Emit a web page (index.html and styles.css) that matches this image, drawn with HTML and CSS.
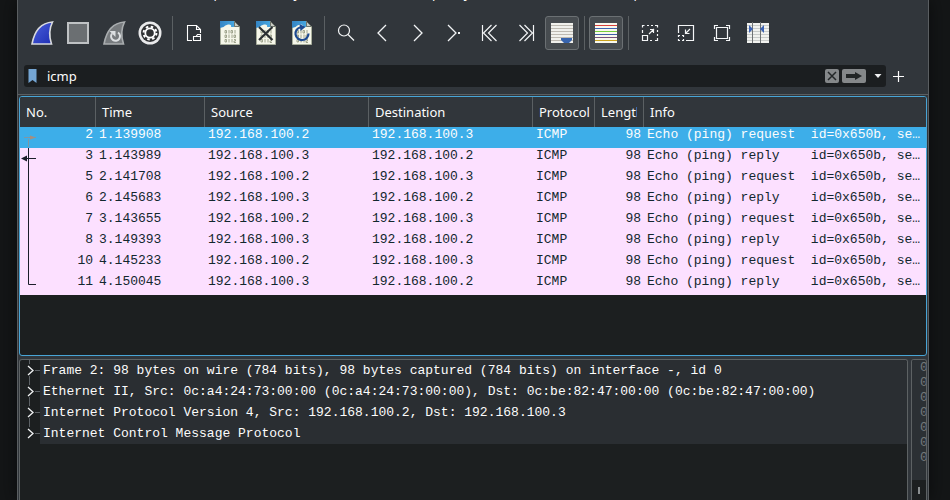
FILE: index.html
```html
<!DOCTYPE html>
<html lang="en">
<head>
<meta charset="utf-8">
<title>Packet capture</title>
<link rel="stylesheet" href="styles.css">
</head>
<body>
<svg class="defs" aria-hidden="true">
  <defs>
    <linearGradient id="blue-fin" x1="0" y1="0" x2="1" y2="1"><stop offset="0" stop-color="#4b60dc"/><stop offset="1" stop-color="#1f2fb4"/></linearGradient>
    <linearGradient id="sky" x1="0" y1="0" x2="1" y2="0"><stop offset="0" stop-color="#3585c4"/><stop offset="1" stop-color="#4bb0e8"/></linearGradient>
    <symbol id="capture-file" viewBox="0 0 24 24">
      <path d="M2.500 0.500H16.500L21.500 5.500V23.500H2.500Z" fill="#f6f7ea" stroke="#a8ae9c"/>
      <path d="M2 0H16L20 6H13Q14 3 10 3.500Q7 4 5.500 6L2 7Z" fill="url(#sky)"/>
      <path d="M16.500 0.500V5.500H21.500Z" fill="#c9ccc4" stroke="#6f756c"/>
      <path d="M7 9.500h1.500v2.500H7zM11 9v3.500M13 9.500h1.500v2.500H13zM17 9v3.500M7 14h1.500v2.500H7zM11 13.500v3.500M14 13.500v3.500M16 14h1.500v2.500H16zM7 18.500h1.500v2.500H7zM11 18v3.500M14 18v3.500M16 18.500h1.500v1.500h-1.500v1.500h2" fill="none" stroke="#8d9279" stroke-width="0.800"/>
    </symbol>
    <symbol id="branch" viewBox="0 0 20 21">
      <path d="M9.500 0V4M9.500 16V21M15 10.500H20" fill="none" stroke="#5c6165"/>
      <path d="M8 6L13 10.500L8 15" fill="none" stroke="#f0f2f3" stroke-width="1.300"/>
    </symbol>
    <symbol id="branch-last" viewBox="0 0 20 21">
      <path d="M9.500 0V4M15 10.500H20" fill="none" stroke="#5c6165"/>
      <path d="M8 6L13 10.500L8 15" fill="none" stroke="#f0f2f3" stroke-width="1.300"/>
    </symbol>
  </defs>
</svg>
<div class="window">
  <nav class="menubar">
    <a href="#file">File</a><a href="#edit">Edit</a><a href="#view">View</a><a href="#go">Go</a><a href="#capture">Capture</a><a href="#analyze">Analyze</a><a href="#statistics">Statistics</a><a href="#telephony">Telephony</a><a href="#wireless">Wireless</a><a href="#tools">Tools</a><a href="#help">Help</a>
  </nav>
  <div class="toolbar" role="toolbar" aria-label="Main toolbar">
    <button class="tool" aria-label="Start capture"><svg viewBox="0 0 24 24"><path d="M2 23C4 12 9 2 22.500 1Q17.500 11 21.500 23Z" fill="url(#blue-fin)" stroke="#d8dade" stroke-width="1.600"/></svg></button>
    <button class="tool" aria-label="Stop capture"><svg viewBox="0 0 24 24"><path d="M2 2H22V22H2Z" fill="#6b6f72" stroke="#bfc2c4" stroke-width="2"/></svg></button>
    <button class="tool" aria-label="Restart capture"><svg viewBox="0 0 24 24"><path d="M2 23C4 12 9 2 22.500 1Q17.500 11 21.500 23Z" fill="#777b7e" stroke="#a9adaf" stroke-width="1.600"/><path d="M16 11.500A4.500 4.500 0 1 1 10 12.500" fill="none" stroke="#dcdfe1" stroke-width="2"/><path d="M7.500 10H13.500V16Z" fill="#dcdfe1"/></svg></button>
    <button class="tool" aria-label="Capture options"><svg viewBox="0 0 24 24"><circle cx="12" cy="12" r="11.500" fill="#e9eaeb"/><circle cx="12" cy="12" r="9" fill="#303234"/><circle cx="12" cy="12" r="6.400" fill="none" stroke="#fff" stroke-width="2" stroke-dasharray="2.500 2.527"/><circle cx="12" cy="12" r="4.700" fill="#303234" stroke="#fff" stroke-width="1.800"/></svg></button>
    <span class="separator"></span>
    <button class="tool" aria-label="Open"><svg viewBox="0 0 24 24"><path d="M10 19.500H5.500V4.500H14.500L18.500 8.500V12M14.500 4.500V8.500H18.500M11.500 19.500V15.500H14L15.500 13.500H18.500V19.500ZM14 15.500H18.500" fill="none" stroke="#fff" stroke-width="1.100"/></svg></button>
    <button class="tool" aria-label="Save"><svg><use href="#capture-file"/></svg></button>
    <button class="tool" aria-label="Close file"><svg viewBox="0 0 24 24"><use href="#capture-file"/><path d="M5 6L18.500 19M18.500 6L5 19" fill="none" stroke="#2b3033" stroke-width="2.200"/></svg></button>
    <button class="tool" aria-label="Reload file"><svg viewBox="0 0 24 24"><use href="#capture-file"/><path d="M18.500 12.500A6.500 6.500 0 1 1 10.500 6.200" fill="none" stroke="#1e4a90" stroke-width="2.200"/><path d="M9.500 3L15.500 6L10.500 10Z" fill="#1e4a90"/></svg></button>
    <span class="separator"></span>
    <button class="tool" aria-label="Find packet"><svg viewBox="0 0 24 24"><circle cx="10" cy="9.500" r="5.500" fill="none" stroke="#f2f4f5" stroke-width="1.200"/><path d="M14 13.500L20 19.500" stroke="#f2f4f5" stroke-width="1.300"/></svg></button>
    <button class="tool" aria-label="Previous packet"><svg viewBox="0 0 24 24"><path d="M16 4L8 12L16 20" fill="none" stroke="#f2f4f5" stroke-width="1.300"/></svg></button>
    <button class="tool" aria-label="Next packet"><svg viewBox="0 0 24 24"><path d="M8 4L16 12L8 20" fill="none" stroke="#f2f4f5" stroke-width="1.300"/></svg></button>
    <button class="tool" aria-label="Go to packet"><svg viewBox="0 0 24 24"><path d="M6 4L14 12L6 20" fill="none" stroke="#f2f4f5" stroke-width="1.300"/><path d="M16 11h2v2h-2z" fill="#f2f4f5"/></svg></button>
    <button class="tool" aria-label="First packet"><svg viewBox="0 0 24 24"><path d="M4.500 4V20M13.500 4L5.500 12L13.500 20M18.500 4L10.500 12L18.500 20" fill="none" stroke="#f2f4f5" stroke-width="1.200"/></svg></button>
    <button class="tool" aria-label="Last packet"><svg viewBox="0 0 24 24"><path d="M19.500 4V20M10.500 4L18.500 12L10.500 20M5.500 4L13.500 12L5.500 20" fill="none" stroke="#f2f4f5" stroke-width="1.200"/></svg></button>
    <button class="tool pressed" aria-pressed="true" aria-label="Auto scroll"><svg viewBox="0 0 24 24"><path d="M1 2H23V22H1Z" fill="#f0f0ec"/><path d="M1 4.500H23M1 7.500H23M1 10.500H23M1 13.500H23M1 16.500H23M1 19.500H23" stroke="#bdb9b1"/><path d="M11 17H22V19L19 22H14L11 19Z" fill="#3764ae"/></svg></button>
    <span class="separator"></span>
    <button class="tool pressed" aria-pressed="true" aria-label="Colorize"><svg viewBox="0 0 24 24"><path d="M1 2H23V22H1Z" fill="#f8f8ee"/><path d="M1 4.500H23" stroke="#d8413c"/><path d="M1 7.500H23" stroke="#3e62b0"/><path d="M1 10.500H23" stroke="#76cf3b"/><path d="M1 13.500H23" stroke="#3e62a8"/><path d="M1 16.500H23" stroke="#75507b"/><path d="M1 19.500H23" stroke="#caa21c"/></svg></button>
    <span class="separator"></span>
    <button class="tool" aria-label="Zoom in"><svg viewBox="0 0 24 24"><path d="M4.500 12V9M4.500 6.500V4.500H6.500M9 4.500H11M13 4.500H15M17 4.500H19.500V6.500M19.500 9V11M19.500 13V15M19.500 17V19.500H17M14 19.500H12M4.500 14.500H9.500V19.500H4.500ZM11 13L16 8M12 8.500H15.500V12" fill="none" stroke="#f4f6f7" stroke-width="1.200"/></svg></button>
    <button class="tool" aria-label="Zoom out"><svg viewBox="0 0 24 24"><path d="M4.500 12V4.500H19.500V19.500H12M4.500 16V14.500H6M8 14.500H9.500V16M9.500 18V19.500H8M6 19.500H4.500V18M16 8L11.500 12.500M11.500 8.500V12.500H15.500" fill="none" stroke="#f4f6f7" stroke-width="1.200"/></svg></button>
    <button class="tool" aria-label="Normal size"><svg viewBox="0 0 24 24"><path d="M6.500 6.500H17.500V17.500H6.500ZM4.500 8V4.500H8M16 4.500H19.500V8M19.500 16V19.500H16M8 19.500H4.500V16" fill="none" stroke="#f4f6f7" stroke-width="1.200"/></svg></button>
    <button class="tool" aria-label="Resize columns"><svg viewBox="0 0 24 24"><path d="M1 2H23V22H1Z" fill="#f1f2ef"/><path d="M1 4.500H23M1 7.500H23M1 10.500H23M1 13.500H23M1 16.500H23M1 19.500H23" stroke="#c8cbc9"/><path d="M6.500 1V22M14.500 1V22" stroke="#6e7274"/><path d="M3 4L7 8L3 12ZM18 4L14 8L18 12Z" fill="#3c62b2"/></svg></button>
  </div>
  <div class="filterbar">
    <div class="filter">
      <button class="bookmark" aria-label="Manage filters"><svg viewBox="0 0 9 14"><path d="M0.500 0H8.500V14L4.500 11L0.500 14Z" fill="#74a5d3"/></svg></button>
      <input type="text" value="icmp" aria-label="Display filter">
      <button class="chip clear" aria-label="Clear filter"><svg viewBox="0 0 14 14"><path d="M3 3L11 11M11 3L3 11" stroke="#232728" stroke-width="1.500"/></svg></button>
      <button class="chip apply" aria-label="Apply filter"><svg viewBox="0 0 24 14"><path d="M4 5H13V3L20 7L13 11V9H4Z" fill="#212526"/></svg></button>
      <button class="recent" aria-label="Recent filters"><svg viewBox="0 0 8 4"><path d="M0.500 0H7.500L4 4Z" fill="#eef0f1"/></svg></button>
    </div>
    <button class="add" aria-label="Add filter button"><svg viewBox="0 0 11 11"><path d="M5.500 0V11M0 5.500H11" stroke="#fcfcfc" stroke-width="1.200"/></svg></button>
  </div>
  <main class="panes">
    <section class="packets">
      <table>
        <colgroup><col class="c-no"><col class="c-time"><col class="c-address"><col class="c-address"><col class="c-protocol"><col class="c-length"><col></colgroup>
        <thead><tr><th>No.</th><th>Time</th><th>Source</th><th>Destination</th><th>Protocol</th><th><div>Length</div></th><th>Info</th></tr></thead>
        <tbody>
          <tr class="selected"><td>2</td><td>1.139908</td><td>192.168.100.2</td><td>192.168.100.3</td><td>ICMP</td><td>98</td><td>Echo (ping) request  id=0x650b, seq=0</td></tr>
          <tr><td>3</td><td>1.143989</td><td>192.168.100.3</td><td>192.168.100.2</td><td>ICMP</td><td>98</td><td>Echo (ping) reply    id=0x650b, seq=0</td></tr>
          <tr><td>5</td><td>2.141708</td><td>192.168.100.2</td><td>192.168.100.3</td><td>ICMP</td><td>98</td><td>Echo (ping) request  id=0x650b, seq=1</td></tr>
          <tr><td>6</td><td>2.145683</td><td>192.168.100.3</td><td>192.168.100.2</td><td>ICMP</td><td>98</td><td>Echo (ping) reply    id=0x650b, seq=1</td></tr>
          <tr><td>7</td><td>3.143655</td><td>192.168.100.2</td><td>192.168.100.3</td><td>ICMP</td><td>98</td><td>Echo (ping) request  id=0x650b, seq=2</td></tr>
          <tr><td>8</td><td>3.149393</td><td>192.168.100.3</td><td>192.168.100.2</td><td>ICMP</td><td>98</td><td>Echo (ping) reply    id=0x650b, seq=2</td></tr>
          <tr><td>10</td><td>4.145233</td><td>192.168.100.2</td><td>192.168.100.3</td><td>ICMP</td><td>98</td><td>Echo (ping) request  id=0x650b, seq=3</td></tr>
          <tr><td>11</td><td>4.150045</td><td>192.168.100.3</td><td>192.168.100.2</td><td>ICMP</td><td>98</td><td>Echo (ping) reply    id=0x650b, seq=3</td></tr>
        </tbody>
      </table>
      <svg class="relations" viewBox="0 0 18 168" aria-hidden="true">
        <path d="M4 10.500H16M8.500 12V20" fill="none" stroke="#7f97a5"/><path d="M10 8.500L16 10.500L10 12.500Z" fill="#a58f80"/>
        <path d="M8.500 21V157.500H16M5 31.500H16" fill="none" stroke="#1b1e2a"/><path d="M1 31.500L7 28.500V34.500Z" fill="#1b1e2a"/>
      </svg>
    </section>
    <div class="lower">
      <section class="details">
        <ul>
          <li><svg><use href="#branch"/></svg><button>Frame 2: 98 bytes on wire (784 bits), 98 bytes captured (784 bits) on interface -, id 0</button></li>
          <li><svg><use href="#branch"/></svg><button>Ethernet II, Src: 0c:a4:24:73:00:00 (0c:a4:24:73:00:00), Dst: 0c:be:82:47:00:00 (0c:be:82:47:00:00)</button></li>
          <li><svg><use href="#branch"/></svg><button>Internet Protocol Version 4, Src: 192.168.100.2, Dst: 192.168.100.3</button></li>
          <li><svg><use href="#branch-last"/></svg><button>Internet Control Message Protocol</button></li>
        </ul>
      </section>
      <section class="bytes">
        <pre>0000
0010
0020
0030
0040
0050
0060</pre>
        <div class="scroll"><span></span></div>
      </section>
    </div>
  </main>
</div>
</body>
</html>
```
FILE: styles.css
```css
* {
  box-sizing: border-box;
}

body {
  margin: 0;
  background: #141617;
  color: #fcfcfc;
  font: 13px/18px "Noto Sans", sans-serif;
}

button {
  display: flex;
  align-items: center;
  justify-content: center;
  margin: 0;
  padding: 0;
  border: 0;
  background: none;
  color: inherit;
  font: inherit;
}

svg {
  display: block;
  flex: none;
}

.defs {
  position: absolute;
  width: 0;
  height: 0;
}

.window {
  display: flex;
  flex-direction: column;
  height: 100vh;
  margin: 0 21px 0 17px;
  border: solid #5a5e61;
  border-width: 0 1px;
  background: #31363b;
  box-shadow: 0 0 16px #0a0b0c;
}

/* Only the lower edge of the menu stays in view. */
.menubar {
  display: flex;
  flex: none;
  align-items: flex-end;
  height: 2px;
  overflow: hidden;
}

.menubar a {
  padding: 0 10px;
  color: inherit;
  text-decoration: none;
}

.toolbar {
  display: flex;
  flex: none;
  align-items: center;
  gap: 2px;
  padding: 14px 7px 9px;
}

.tool {
  flex: none;
  width: 34px;
  height: 34px;
  border: 1px solid transparent;
  border-radius: 3px;
}

.tool svg {
  width: 24px;
  height: 24px;
}

.tool.pressed {
  border-color: #6b7073;
  background: #474c50;
}

.separator {
  align-self: stretch;
  width: 6px;
  background: linear-gradient(#5b6063, #5b6063) center / 1px 100% no-repeat;
}

.filterbar {
  display: flex;
  flex: none;
  padding: 6px 24px 7px 6px;
  border-bottom: 1px solid #5a5f62;
}

.filter {
  display: flex;
  flex: 1;
  align-items: center;
  gap: 3px;
  height: 22px;
  padding: 0 2px 0 4px;
  border-radius: 3px;
  background: #1b1e20;
}

.bookmark svg {
  width: 9px;
  height: 14px;
}

.filter input {
  flex: 1;
  min-width: 0;
  height: 20px;
  padding: 0 7px;
  border: 0;
  outline: 0;
  background: none;
  color: inherit;
  font: inherit;
}

.chip {
  height: 14px;
  border-radius: 2px;
  background: #85888a;
}

.chip svg {
  height: 14px;
}

.clear,
.clear svg {
  width: 14px;
}

.apply,
.apply svg {
  width: 24px;
}

.recent {
  width: 12px;
  height: 14px;
  margin-left: 3px;
}

.recent svg {
  width: 8px;
  height: 4px;
}

.add {
  width: 11px;
  margin-left: 7px;
}

.add svg {
  width: 11px;
  height: 11px;
}

.panes {
  display: flex;
  flex: 1;
  flex-direction: column;
  gap: 3px;
  min-height: 0;
  padding: 1px 1px 0;
}

.packets {
  position: relative;
  flex: 260 1 0;
  min-height: 0;
  overflow: hidden;
  border: 1px solid #48a5d6;
  border-radius: 3px;
  background: #1c1f20;
}

table {
  width: 100%;
  border-collapse: collapse;
  table-layout: fixed;
}

.c-no { width: 76px; }
.c-time { width: 109px; }
.c-address { width: 164px; }
.c-protocol { width: 62px; }
.c-length { width: 49px; }

th {
  height: 30px;
  padding: 0 5px 0 6px;
  background: linear-gradient(#5b6063, #5b6063) right / 1px 100% no-repeat #31363b;
  font-weight: 400;
  text-align: left;
}

th:last-child {
  background: #31363b;
}

th div {
  margin-right: 2px;
  overflow: hidden;
}

td {
  height: 21px;
  padding: 0 3px;
  overflow: hidden;
  background: #fce0ff;
  color: #12272e;
  font: 13px/15px "Liberation Mono", monospace;
  text-overflow: ellipsis;
  vertical-align: top;
  white-space: pre;
}

td:first-child,
td:nth-child(6) {
  text-align: right;
}

.selected td {
  background: #3daee9;
  color: #fcfcfc;
}

.relations {
  position: absolute;
  top: 30px;
  left: 0;
  width: 18px;
  height: 168px;
}

.lower {
  display: flex;
  flex: 142 1 0;
  gap: 3px;
  min-height: 0;
}

.details,
.bytes {
  overflow: hidden;
  border: 1px solid #5d6264;
  border-bottom: 0;
  border-radius: 3px 3px 0 0;
  background: #1c1f20;
}

.details {
  flex: 1;
}

.details ul {
  margin: 0;
  padding: 0;
  list-style: none;
}

.details li {
  display: flex;
}

.details li svg {
  width: 20px;
  height: 21px;
}

.details li button {
  flex: 1;
  justify-content: flex-start;
  height: 21px;
  padding: 0 3px;
  background: #2a2e32;
  font: 13px/15px "Liberation Mono", monospace;
  white-space: nowrap;
}

.bytes {
  display: flex;
  flex-direction: column;
  width: 16px;
}

.bytes pre {
  flex: 1;
  margin: 0;
  padding-left: 8px;
  background: #2b3034;
  color: #73787b;
  font: 13px/15px "Liberation Mono", monospace;
}

.scroll {
  display: flex;
  flex: none;
  align-items: center;
  justify-content: center;
  height: 20px;
}

.scroll span {
  width: 2px;
  height: 7px;
  background: #8a8e90;
}
```
